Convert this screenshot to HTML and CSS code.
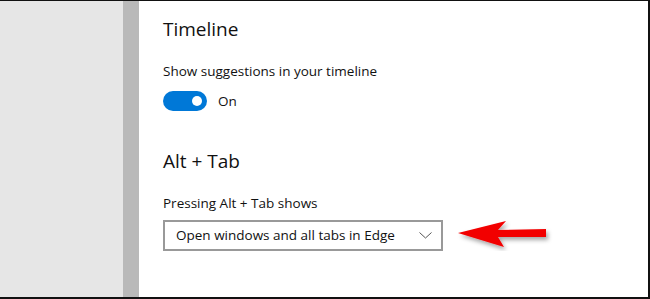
FILE: index.html
```html
<!DOCTYPE html>
<html lang="en">
<head>
  <meta charset="UTF-8">
  <title>Settings - Multitasking</title>
  <link rel="stylesheet" href="styles.css">
</head>
<body>
  <div class="frame">
    <!-- Navigation pane -->
    <div class="nav-pane"></div>
    <div class="scroll-strip"></div>

    <!-- Settings content -->
    <main class="content">
      <h2 class="section-title">Timeline</h2>
      <p class="setting-label">Show suggestions in your timeline</p>
      <div class="toggle-row">
        <span class="toggle"><span class="knob"></span></span>
        <span class="toggle-text">On</span>
      </div>

      <h2 class="section-title alt">Alt + Tab</h2>
      <p class="setting-label">Pressing Alt + Tab shows</p>
      <div class="select-row">
        <div class="select">
          <span>Open windows and all tabs in Edge</span>
          <svg class="chevron" width="13" height="7" viewBox="0 0 13 7">
            <path d="M0.5 0.5 L6.5 6 L12.5 0.5" fill="none" stroke="#555" stroke-width="1"/>
          </svg>
        </div>
        <svg class="arrow" width="96" height="32" viewBox="0 0 96 32">
          <defs>
            <filter id="shade" x="-10%" y="-30%" width="130%" height="180%">
              <feDropShadow dx="2" dy="3" stdDeviation="2" flood-color="#000" flood-opacity="0.35"/>
            </filter>
          </defs>
          <polygon filter="url(#shade)" fill="#f20000"
            points="1,14 49,2 41,11 89,10 89,18 41,18 47,28"/>
        </svg>
      </div>
    </main>
  </div>
</body>
</html>
```

FILE: styles.css
```css
/* General */
body {
  margin: 0;
  padding: 0;
  background: #fff;
  font-family: 'Open Sans', 'Noto Sans', sans-serif;
  color: #000;
}

.frame {
  display: flex;
  width: 650px;
  height: 299px;
  box-sizing: border-box;
  border-top: 1px solid #111;
  border-right: 2px solid #111;
  border-bottom: 2px solid #111;
  overflow: hidden;
}

/* Left side */
.nav-pane {
  width: 123px;
  background-color: #e6e6e6;
}

.scroll-strip {
  width: 16px;
  background-color: #b9b9b9;
}

/* Content */
.content {
  flex: 1;
  padding: 14px 0 0 24px;
}

.section-title {
  margin: 0;
  font-size: 19px;
  font-weight: 400;
  line-height: 28px;
  color: #111;
}

.section-title.alt {
  margin-top: 36px;
}

.setting-label {
  margin: 18px 0 0;
  font-size: 13.5px;
  line-height: 20px;
  color: #111;
}

.toggle-row {
  display: flex;
  align-items: center;
  gap: 11px;
  margin-top: 10px;
}

.toggle {
  display: flex;
  align-items: center;
  justify-content: flex-end;
  width: 44px;
  height: 20px;
  box-sizing: border-box;
  padding-right: 5px;
  border-radius: 10px;
  background-color: #0078d7;
}

.knob {
  width: 10px;
  height: 10px;
  border-radius: 50%;
  background: #fff;
}

.toggle-text {
  font-size: 13.5px;
  color: #111;
}

.select-row {
  display: flex;
  align-items: center;
  gap: 14px;
  margin-top: 6px;
}

.select {
  display: flex;
  align-items: center;
  justify-content: space-between;
  width: 280px;
  height: 31px;
  box-sizing: border-box;
  padding: 0 9px 0 11px;
  border: 2px solid #999;
  font-size: 13.5px;
  color: #111;
}

.chevron {
  margin-top: 1px;
}
```
